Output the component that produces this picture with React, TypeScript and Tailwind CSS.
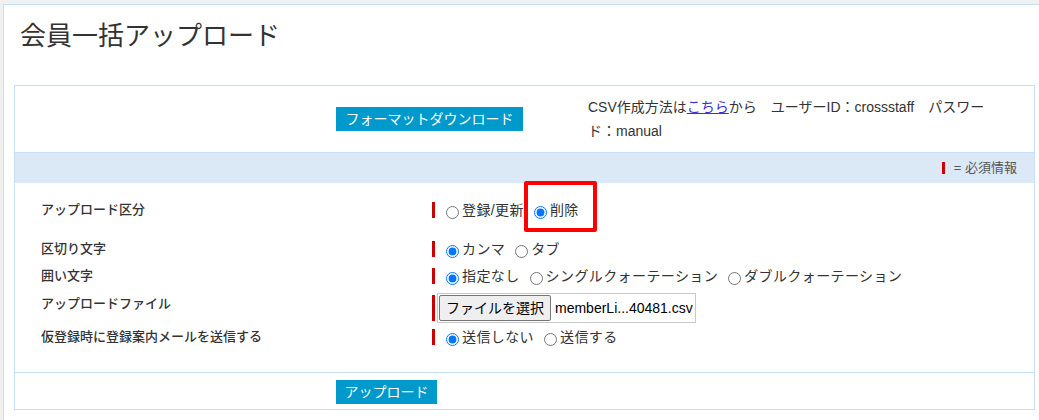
import React from 'react';

const FONT = { fontFamily: '"Liberation Sans", "Noto Sans CJK JP", sans-serif' };

function Radio({ name, label, checked }: { name: string; label: string; checked?: boolean }) {
  return (
    <label className="inline-flex items-center mr-[5px]">
      <input
        type="radio"
        name={name}
        defaultChecked={checked}
        className="w-[13px] h-[13px] mt-[4px] mb-0 ml-[5px] mr-[3px]"
      />
      <span className="tracking-[0.4px]">{label}</span>
    </label>
  );
}

function ReqBar({ tall }: { tall?: boolean }) {
  return <span className={tall ? 'w-[3px] h-[26px] bg-[#cc0000] shrink-0' : 'w-[3px] h-[16px] bg-[#cc0000] shrink-0'} />;
}

export default function App() {
  return (
    <div className="relative w-full h-[420px] bg-[#f0f0f0] pt-[4px] pl-[3px] overflow-hidden" style={FONT}>
      <div className="h-full bg-white border-t border-l border-t-[#c5dff5] border-l-[#dcdcdc]">
        {/* Title */}
        <h1 className="pt-[18px] pl-[16px] text-[26px] leading-[26px] font-normal text-[#333]">会員一括アップロード</h1>

        <div className="mt-[36px] ml-[10px] w-[1021px] border border-[#c5dff5]">
          {/* Format download row */}
          <div className="h-[67px] flex items-center pl-[321px] border-b border-[#c5dff5]">
            <button className="w-[187px] h-[24px] bg-[#0099cc] text-white text-[14px] leading-[24px] text-center">
              フォーマットダウンロード
            </button>
            <p className="ml-[65px] w-[418px] text-[14px] leading-[24px] text-[#333]">
              CSV作成方法は<span className="text-[#3b30d8] underline">こちら</span>から　ユーザーID：crossstaff　パスワード：manual
            </p>
          </div>

          {/* Required legend */}
          <div className="h-[30px] bg-[#dbe9f7] flex items-center justify-end pr-[17px] text-[13px] text-[#555]">
            <span className="w-[3px] h-[12px] bg-[#cc0000] mr-[9px]" />
            <span>= 必須情報</span>
          </div>

          {/* Form rows */}
          <div className="pt-[19px] pb-[27px] border-b border-[#c5dff5] text-[14px] text-[#333]">
            <div className="flex h-[16px] items-center">
              <div className="w-[417px] pl-[26px] text-[13px] leading-[16px] font-medium text-[#333]">アップロード区分</div>
              <div className="flex items-center h-full">
                <ReqBar />
                <div className="pl-[6px] flex items-center">
                  <Radio name="kubun" label="登録/更新" />
                  <Radio name="kubun" label="削除" checked />
                </div>
              </div>
            </div>

            <div className="flex h-[16px] items-center mt-[23px]">
              <div className="w-[417px] pl-[26px] text-[13px] leading-[16px] font-medium text-[#333]">区切り文字</div>
              <div className="flex items-center h-full">
                <ReqBar />
                <div className="pl-[6px] flex items-center">
                  <Radio name="sep" label="カンマ" checked />
                  <Radio name="sep" label="タブ" />
                </div>
              </div>
            </div>

            <div className="flex h-[16px] items-center mt-[11px]">
              <div className="w-[417px] pl-[26px] text-[13px] leading-[16px] font-medium text-[#333]">囲い文字</div>
              <div className="flex items-center h-full">
                <ReqBar />
                <div className="pl-[6px] flex items-center">
                  <Radio name="quote" label="指定なし" checked />
                  <Radio name="quote" label="シングルクォーテーション" />
                  <Radio name="quote" label="ダブルクォーテーション" />
                </div>
              </div>
            </div>

            <div className="flex h-[30px] mt-[9px]">
              <div className="w-[417px] pl-[26px] pt-[3px] text-[13px] leading-[16px] font-medium text-[#333]">アップロードファイル</div>
              <div className="flex items-center h-full">
                <ReqBar tall />
                <div className="ml-[2px] h-[30px] w-[259px] border border-[#c8c8c8] p-[1px] flex items-center">
                  <span className="h-full px-[6px] flex items-center bg-[#efefef] border border-[#767676] rounded-[2px] text-black">
                    ファイルを選択
                  </span>
                  <span className="ml-[4px] text-black">memberLi...40481.csv</span>
                </div>
              </div>
            </div>

            <div className="flex h-[16px] items-center mt-[6px]">
              <div className="w-[417px] pl-[26px] text-[13px] leading-[16px] font-medium text-[#333]">仮登録時に登録案内メールを送信する</div>
              <div className="flex items-center h-full">
                <ReqBar />
                <div className="pl-[6px] flex items-center">
                  <Radio name="mail" label="送信しない" checked />
                  <Radio name="mail" label="送信する" />
                </div>
              </div>
            </div>
          </div>

          {/* Upload button */}
          <div className="pt-[7px] pb-[5px] pl-[321px]">
            <button className="w-[101px] h-[24px] bg-[#0099cc] text-white text-[14px] leading-[24px] text-center">
              アップロード
            </button>
          </div>
        </div>
      </div>

      {/* annotation highlight */}
      <div className="absolute left-[524px] top-[181px] w-[73px] h-[51px] border-[4px] border-[#ff0000] rounded-[2px] pointer-events-none" />
    </div>
  );
}
